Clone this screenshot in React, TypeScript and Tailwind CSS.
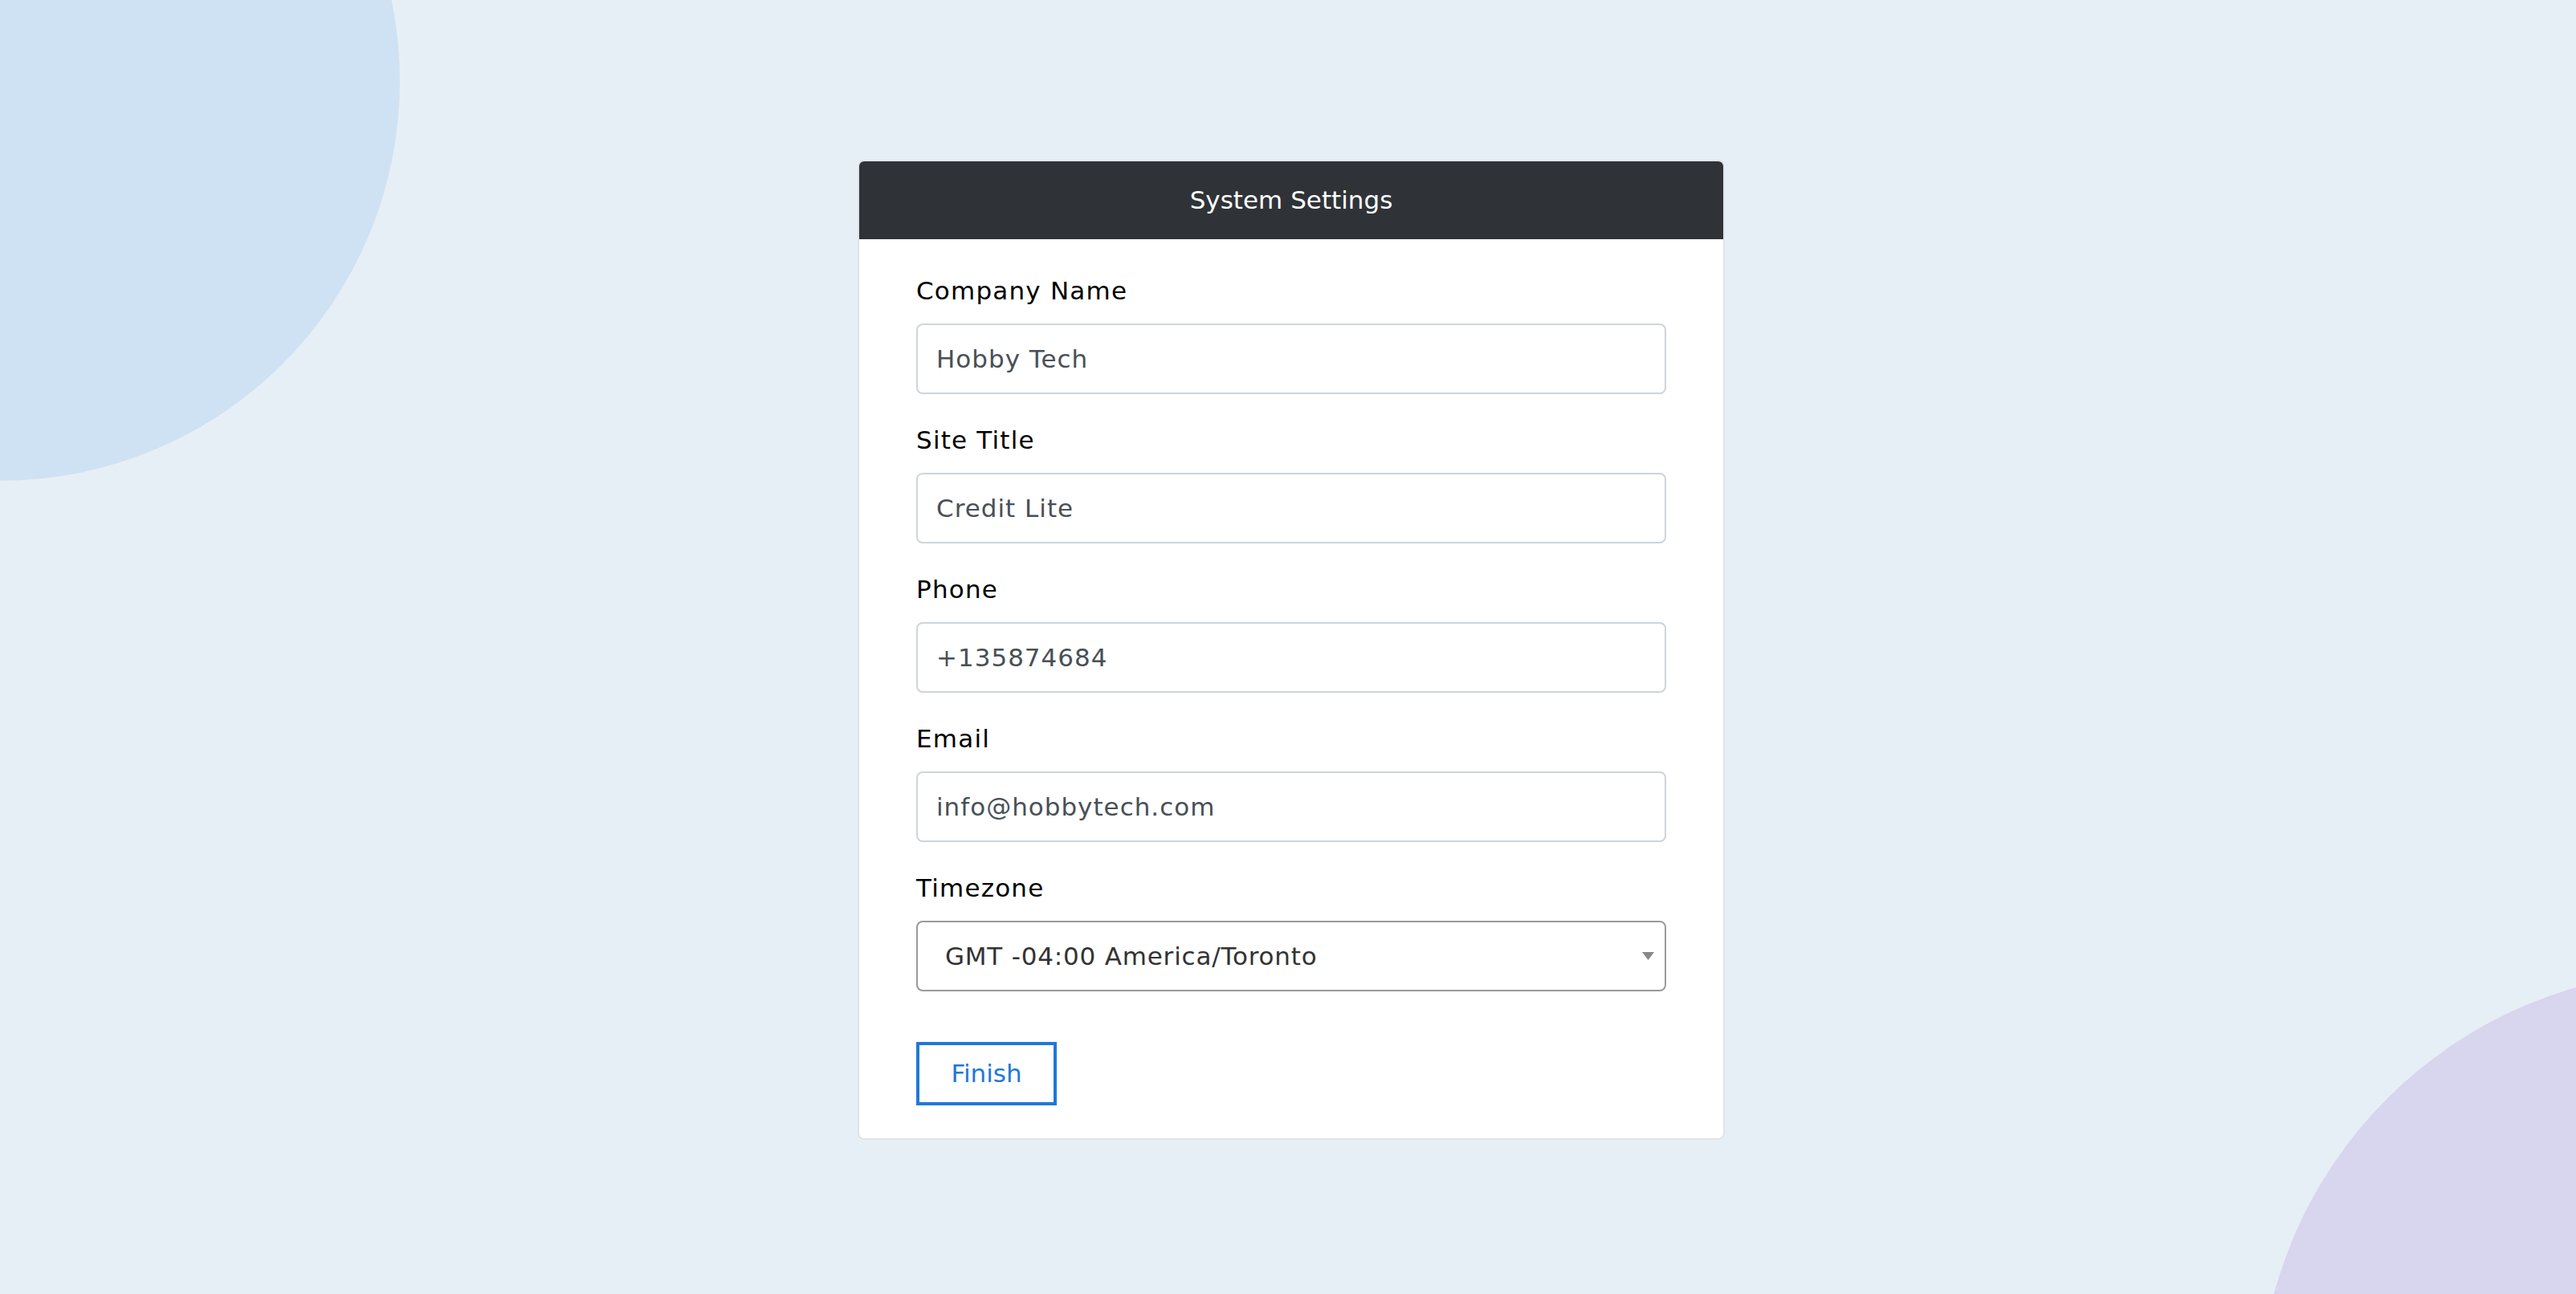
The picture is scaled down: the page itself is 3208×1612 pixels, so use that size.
import React from "react";

const fields = [
  { label: "Company Name", value: "Hobby Tech" },
  { label: "Site Title", value: "Credit Lite" },
  { label: "Phone", value: "+135874684" },
  { label: "Email", value: "info@hobbytech.com" },
];

function Label({ children }: { children: React.ReactNode }) {
  return <div className="mb-[17px] h-[48px] leading-[48px] tracking-[1.2px] text-black">{children}</div>;
}

export default function App() {
  return (
    <div
      className="relative h-[1612px] w-full overflow-hidden bg-[#e7eff6] text-[31px]"
      style={{ fontFamily: '"DejaVu Sans", "Liberation Sans", sans-serif' }}
    >
      <div className="absolute left-[-498px] top-[-397px] h-[996px] w-[996px] rounded-full bg-[#cfe2f3]" />
      <div className="absolute left-[2813px] top-[1209px] h-[1090px] w-[1090px] rounded-full bg-[#d8d5ee]" />

      <div className="relative flex justify-center pl-[8px] pt-[199px]">
        <div className="w-[1080px] overflow-hidden rounded-[8px] border-2 border-[#e0e3e6] bg-white">
          <div className="flex h-[97px] items-center justify-center bg-[#2f3337] text-white">
            System Settings
          </div>
          <div className="px-[71px] pb-[41px] pt-[40px]">
            {fields.map((f) => (
              <div key={f.label} className="mb-[33px]">
                <Label>{f.label}</Label>
                <div className="flex h-[88px] items-center rounded-[8px] border-2 border-[#ced4da] bg-white pl-[23px] tracking-[1px] text-[#495057]">
                  {f.value}
                </div>
              </div>
            ))}
            <div>
              <Label>Timezone</Label>
              <div className="flex h-[88px] items-center justify-between rounded-[8px] border-2 border-[#9a9a9a] bg-white pl-[34px] pr-[13px] text-[#333333]">
                <span className="tracking-[0.8px]">GMT -04:00 America/Toronto</span>
                <svg width="15" height="10" viewBox="0 0 15 10">
                  <polygon points="0,0 15,0 7.5,10" fill="#888888" />
                </svg>
              </div>
            </div>
            <button className="mt-[63px] flex h-[79px] w-[175px] items-center justify-center border-4 border-[#1f78d8] bg-white text-[#1f78d8]">
              Finish
            </button>
          </div>
        </div>
      </div>
    </div>
  );
}
